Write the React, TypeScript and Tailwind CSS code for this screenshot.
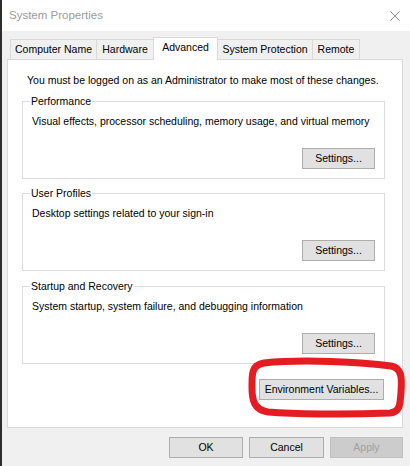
import React from "react";

function Btn({ w, children, disabled }: { w: string; children: React.ReactNode; disabled?: boolean }) {
  return (
    <button
      className={
        disabled
          ? `${w} h-[21px] border border-[#bfbfbf] bg-[#cccccc] text-[#a0a0a0] flex items-center justify-center leading-[15px]`
          : `${w} h-[21px] border border-[#adadad] bg-[#e1e1e1] text-black flex items-center justify-center leading-[15px]`
      }
    >
      {children}
    </button>
  );
}

function Group({ title, desc, mt }: { title: string; desc: string; mt: string }) {
  return (
    <fieldset className={`${mt} ml-[14px] w-[363px] border border-[#dcdcdc] pl-[9px] pr-[9px] pb-[9px]`}>
      <legend className="ml-[-2px] px-[1px] leading-[15px]">{title}</legend>
      <p className="mt-[5px] leading-[15px]">{desc}</p>
      <div className="mt-[19px] flex justify-end">
        <Btn w="w-[73px]">Settings...</Btn>
      </div>
    </fieldset>
  );
}

export default function App() {
  const tabs = [
    { label: "Computer Name", w: "w-[87px]" },
    { label: "Hardware", w: "w-[58px]" },
    { label: "Advanced", w: "w-[65px]", sel: true },
    { label: "System Protection", w: "w-[96px]" },
    { label: "Remote", w: "w-[48px]" },
  ];
  return (
    <div className="relative w-[410px] h-[466px] overflow-hidden bg-[#f0f0f0] border-l-2 border-[#2d2d2d] font-['Liberation_Sans',Arial,sans-serif] text-[10.5px] leading-[15px] text-black">
      <div className="h-[31px] bg-white flex items-center justify-between pl-[7px] pr-[10px]">
        <span className="text-[11.5px] text-[#9b9b9b]">System Properties</span>
        <svg width="10" height="10" viewBox="0 0 10 10">
          <path d="M0.5 0.5 L9.5 9.5 M9.5 0.5 L0.5 9.5" stroke="#8f8f8f" strokeWidth="1" fill="none" />
        </svg>
      </div>
      <div className="pl-[5px] pr-[7px] pt-[6px]">
        <div className="flex items-end h-[22px] pl-[3px]">
          {tabs.map((t, i) =>
            t.sel ? (
              <div
                key={t.label}
                className={`${t.w} -ml-px relative z-10 -mb-px h-[23px] bg-white border border-b-0 border-[#d9d9d9] flex items-start justify-center pt-[2px]`}
              >
                {t.label}
              </div>
            ) : (
              <div
                key={t.label}
                className={`${t.w} ${i === 0 ? "" : "-ml-px"} h-[20px] bg-[#f0f0f0] border border-b-0 border-[#d9d9d9] flex items-center justify-center`}
              >
                {t.label}
              </div>
            )
          )}
        </div>
        <div className="h-[369px] border border-[#d9d9d9] bg-white pt-[13px]">
          <p className="pl-[19px]">You must be logged on as an Administrator to make most of these changes.</p>
          <Group mt="mt-[6px]" title="Performance" desc="Visual effects, processor scheduling, memory usage, and virtual memory" />
          <Group mt="mt-[7px]" title="User Profiles" desc="Desktop settings related to your sign-in" />
          <Group mt="mt-[8px]" title="Startup and Recovery" desc="System startup, system failure, and debugging information" />
          <div className="ml-[14px] w-[363px] mt-[15px] flex justify-end pr-[1px]">
            <Btn w="w-[125px]">Environment Variables...</Btn>
          </div>
        </div>
        <div className="mt-[9px] flex justify-end gap-[6px]">
          <Btn w="w-[74px]">OK</Btn>
          <Btn w="w-[75px]">Cancel</Btn>
          <Btn w="w-[73px]" disabled>
            Apply
          </Btn>
        </div>
      </div>
      <svg className="absolute inset-0 pointer-events-none" width="410" height="466" viewBox="0 0 410 466">
        <path
          d="M262 363 C 300 359, 360 362, 389 366 C 400 368, 400 378, 399 392 C 398 405, 398 412, 388 413 C 340 415, 290 414, 266 412 C 252 410, 250 400, 250 388 C 250 375, 249 365, 262 363 Z"
          stroke="#e41d22"
          strokeWidth="7"
          fill="none"
          strokeLinejoin="round"
          strokeLinecap="round"
        />
      </svg>
    </div>
  );
}
